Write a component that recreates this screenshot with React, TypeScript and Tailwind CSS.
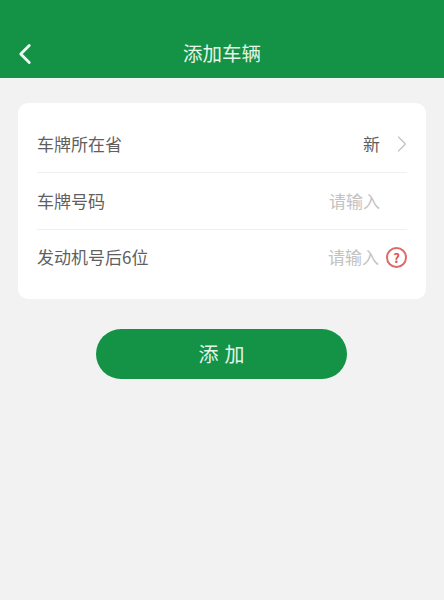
import { ChevronLeft, ChevronRight } from "lucide-react";

const FONT = "font-['Noto_Sans_CJK_SC','Noto_Sans',sans-serif]";

function Row({
  label,
  children,
  last,
}: {
  label: string;
  children: React.ReactNode;
  last?: boolean;
}) {
  return (
    <div
      className={`flex items-center justify-between ${last ? "h-[54px]" : "h-[57px] border-b border-[#f0f0f0]"}`}
    >
      <span className="text-[17px] text-[#5f5f5f]">{label}</span>
      {children}
    </div>
  );
}

function HelpIcon() {
  return (
    <span className="flex h-[21px] w-[21px] items-center justify-center rounded-full border-2 border-[#e06a6a] text-[13px] font-bold leading-none text-[#d9534f]">
      ?
    </span>
  );
}

export default function App() {
  return (
    <div className={`flex h-[600px] w-[444px] flex-col bg-[#f2f2f3] ${FONT}`}>
      {/* Header */}
      <header className="relative flex h-[78px] items-end justify-center bg-[#149245] pb-[11px]">
        <ChevronLeft
          size={34}
          strokeWidth={2}
          className="absolute bottom-[7px] left-[8px] text-[#eef8f1]"
        />
        <h1 className="text-[19.5px] font-normal leading-[28px] text-[#e4f5e9]">添加车辆</h1>
      </header>

      {/* Form */}
      <div className="mx-[18px] mt-[25px] rounded-[10px] bg-white px-[19px] pt-[13px] pb-[15px]">
        <Row label="车牌所在省">
          <div className="flex items-center gap-[8px]">
            <span className="text-[17px] text-[#5f5f5f]">新</span>
            <ChevronRight size={28} strokeWidth={1.1} className="mr-[-9px] text-[#c4c4c4]" />
          </div>
        </Row>
        <Row label="车牌号码">
          <span className="mr-[27px] text-[17px] text-[#c2c2c2]">请输入</span>
        </Row>
        <Row label="发动机号后6位" last>
          <div className="flex items-center gap-[7px]">
            <span className="text-[17px] text-[#c2c2c2]">请输入</span>
            <HelpIcon />
          </div>
        </Row>
      </div>

      <button className="ml-[96px] mt-[30px] flex h-[50px] w-[251px] items-center justify-center rounded-full bg-[#149245] pl-[6px] text-[20px] tracking-[6px] text-[#e4f5e9]">
        添加
      </button>
    </div>
  );
}
